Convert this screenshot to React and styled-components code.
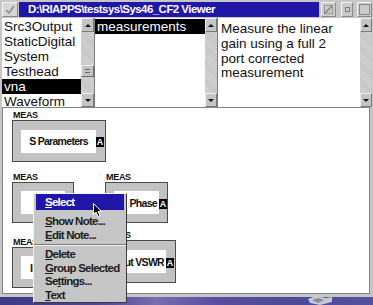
import React from "react";
import styled, { createGlobalStyle } from "styled-components";

const GlobalStyle = createGlobalStyle`
  html, body {
    margin: 0;
    padding: 0;
  }
  body {
    width: 373px;
    height: 305px;
    overflow: hidden;
    background: #4a4a98;
    font-family: "Liberation Sans", Arial, sans-serif;
  }
`;

const Screen = styled.div`
  width: 373px;
  height: 305px;
  display: flex;
  flex-direction: column;
`;

const Window = styled.div`
  height: 297px;
  box-sizing: border-box;
  padding: 0 1px 3px 2px;
  display: flex;
  flex-direction: column;
  background: #c6c6c6;
`;

const TitleBar = styled.div`
  height: 18px;
  display: flex;
  align-items: center;
`;

const SysButton = styled.div`
  width: 16px;
  height: 15px;
  box-sizing: border-box;
  background: #d6d6d6;
  border: 1px solid;
  border-color: #f4f4f4 #8a8a8a #8a8a8a #f4f4f4;
  display: flex;
  align-items: center;
  justify-content: center;
`;

const Title = styled.div`
  flex: 1;
  height: 15px;
  margin-left: 1px;
  background: #2016a8;
  color: #fff;
  font: bold 11.5px/15px "Liberation Sans", Arial, sans-serif;
  letter-spacing: -0.55px;
  padding-left: 9px;
  white-space: nowrap;
  overflow: hidden;
`;

const TitleButtons = styled.div`
  display: flex;
  align-items: center;
  margin-left: 2px;
`;

const TitleButton = styled.div`
  width: ${(p) => p.$w}px;
  height: 15px;
  margin-left: ${(p) => p.$gap}px;
  box-sizing: border-box;
  background: #cacaca;
  border: 1px solid;
  border-color: #f4f4f4 #8a8a8a #8a8a8a #f4f4f4;
  display: flex;
  align-items: center;
  justify-content: center;
`;

const Panes = styled.div`
  height: 89px;
  display: flex;
`;

const Pane = styled.div`
  display: flex;
  width: ${(p) => (p.$w ? `${p.$w}px` : "auto")};
  flex: ${(p) => (p.$w ? "none" : "1")};
  box-sizing: border-box;
  border-right: ${(p) => (p.$last ? "none" : "1px solid #7c7c7c")};
`;

const List = styled.div`
  flex: 1;
  background: #fff;
  padding-top: 1px;
  overflow: hidden;
  font-size: 13.5px;
  color: #101010;
`;

const ListRow = styled.div`
  height: 15px;
  line-height: 15px;
  padding-left: 2px;
  white-space: nowrap;
  background: ${(p) => (p.$selected ? "#000" : "transparent")};
  color: ${(p) => (p.$selected ? "#fff" : "inherit")};
`;

const NoteText = styled.div`
  flex: 1;
  background: #fff;
  padding: 4px 0 0 3px;
  font-size: 13.5px;
  line-height: 14.8px;
  color: #101010;
  & p {
    margin: 0;
    max-width: 126px;
  }
`;

const ScrollBar = styled.div`
  width: ${(p) => p.$w}px;
  display: flex;
  flex-direction: column;
  background: #cdcdcd;
`;

const ArrowButton = styled.div`
  height: 14px;
  box-sizing: border-box;
  background: #c4c4c4;
  border: 1px solid;
  border-color: #f0f0f0 #7a7a7a #7a7a7a #f0f0f0;
  display: flex;
  align-items: center;
  justify-content: center;
  &::after {
    content: "";
    border-left: 3px solid transparent;
    border-right: 3px solid transparent;
    ${(p) =>
      p.$down ? "border-top: 3px solid #111;" : "border-bottom: 3px solid #111;"}
  }
`;

const Track = styled.div`
  flex: 1;
  background: repeating-linear-gradient(45deg, #d2d2d2 0 1px, #c4c4c4 1px 2px);
`;

const Thumb = styled.div`
  margin-top: ${(p) => p.$offset}px;
  height: 12px;
  box-sizing: border-box;
  background: #c4c4c4;
  border: 1px solid;
  border-color: #f0f0f0 #6a6a6a #6a6a6a #f0f0f0;
  display: flex;
  flex-direction: column;
  justify-content: center;
  gap: 2px;
  padding: 0 3px;
  & i {
    display: block;
    height: 1px;
    background: #6a6a6a;
  }
`;

const Canvas = styled.div`
  flex: 1;
  position: relative;
  margin-right: 2px;
  background: #fff;
  border: 1px solid #858585;
`;

const Node = styled.div`
  position: absolute;
  left: ${(p) => p.$x}px;
  top: ${(p) => p.$y}px;
  display: flex;
  flex-direction: column;
`;

const NodeTag = styled.span`
  font: bold 9px/10px "Liberation Sans", Arial, sans-serif;
  letter-spacing: -0.3px;
  color: #111;
  padding-left: 1px;
`;

const NodeBox = styled.div`
  width: ${(p) => p.$w}px;
  height: ${(p) => p.$h}px;
  box-sizing: border-box;
  background: #c2c2c2;
  border: 1px solid #4a4a4a;
  display: flex;
  align-items: center;
  padding-left: 8px;
`;

const Field = styled.div`
  width: ${(p) => p.$w}px;
  height: 23px;
  box-sizing: border-box;
  padding-right: ${(p) => (p.$end ? 2 : 0)}px;
  background: #fff;
  display: flex;
  align-items: center;
  justify-content: ${(p) => (p.$end ? "flex-end" : "center")};
  overflow: hidden;
  white-space: nowrap;
  font: bold 10.5px "Liberation Sans", Arial, sans-serif;
  letter-spacing: -0.7px;
  color: #111;
`;

const Badge = styled.span`
  width: 8px;
  height: 10px;
  margin-top: 2px;
  background: #000;
  color: #fff;
  font: bold 9px/10px "Liberation Sans", Arial, sans-serif;
  text-align: center;
`;

const Menu = styled.div`
  position: absolute;
  left: 30px;
  top: 85px;
  z-index: 10;
  width: 94px;
  box-sizing: border-box;
  padding: 0 2px;
  background: #c6c6c6;
  border: 1px solid;
  border-color: #f2f2f2 #3a3a3a #3a3a3a #f2f2f2;
  font: bold 11.5px "Liberation Sans", Arial, sans-serif;
  letter-spacing: -0.75px;
  color: #1c1c1c;
`;

const MenuItem = styled.div`
  height: ${(p) => (p.$active ? 16 : 13.5)}px;
  line-height: ${(p) => (p.$active ? 16 : 13.5)}px;
  margin-bottom: ${(p) => (p.$active ? 5 : 0)}px;
  padding-left: 9px;
  white-space: nowrap;
  background: ${(p) => (p.$active ? "#2016a8" : "transparent")};
  color: ${(p) => (p.$active ? "#fff" : "inherit")};
`;

const MenuSeparator = styled.div`
  margin: 2px -2px;
  border-top: 1px solid #7c7c7c;
  border-bottom: 1px solid #f2f2f2;
`;

const Cursor = styled.svg`
  position: absolute;
  left: 90px;
  top: 95px;
  z-index: 11;
`;

const Desktop = styled.div`
  flex: 1;
  position: relative;
  background: linear-gradient(
    90deg,
    #3a3a88 0%,
    #4c4498 25%,
    #7a6cb0 42%,
    #5a4ca0 58%,
    #4a4a98 80%,
    #5252a0 100%
  );
`;

const TrayIcon = styled.svg`
  position: absolute;
  left: 306px;
  top: -2px;
`;

const listOne = ["Src3Output", "StaticDigital", "System", "Testhead", "vna", "Waveform"];

const nodes = [
  { x: 9, y: 2, w: 94, h: 42, fw: 75, text: "S Parameters" },
  { x: 9, y: 64, w: 62, h: 41, fw: 45, text: "Gain" },
  { x: 102, y: 64, w: 63, h: 41, fw: 45, text: "Phase", end: true },
  { x: 9, y: 129, w: 82, h: 41, fw: 64, text: "Input VSWR", end: true },
  { x: 102, y: 122, w: 71, h: 43, fw: 52, text: "Output VSWR", end: true },
];

const Scroll = ({ w, thumb }) => (
  <ScrollBar $w={w}>
    <ArrowButton />
    <Track>
      {thumb !== undefined && (
        <Thumb $offset={thumb}>
          <i />
          <i />
        </Thumb>
      )}
    </Track>
    <ArrowButton $down />
  </ScrollBar>
);

const App = () => {
  return (
    <>
      <GlobalStyle />
      <Screen>
        <Window>
          <TitleBar>
            <SysButton>
              <svg width="10" height="9" viewBox="0 0 10 9">
                <polyline points="1,5 4,8 9,1" fill="none" stroke="#8c8c8c" strokeWidth="1.6" />
              </svg>
            </SysButton>
            <Title>D:\RIAPPS\testsys\Sys46_CF2 Viewer</Title>
            <TitleButtons>
              <TitleButton $w={15} $gap={0}>
                <svg width="9" height="9" viewBox="0 0 9 9">
                  <rect x="0.5" y="0.5" width="8" height="8" fill="none" stroke="#9a9a9a" />
                  <line x1="1" y1="8" x2="8" y2="1" stroke="#7a7a7a" strokeWidth="1.2" />
                </svg>
              </TitleButton>
              <TitleButton $w={12} $gap={5}>
                <svg width="5" height="5" viewBox="0 0 5 5">
                  <rect x="0.5" y="0.5" width="4" height="4" fill="none" stroke="#7a7a7a" />
                </svg>
              </TitleButton>
              <TitleButton $w={15} $gap={4}>
                <svg width="11" height="11" viewBox="0 0 11 11">
                  <rect x="0.5" y="0.5" width="10" height="10" fill="none" stroke="#8a8a8a" />
                </svg>
              </TitleButton>
            </TitleButtons>
          </TitleBar>

          <Panes>
            <Pane $w={93}>
              <List>
                {listOne.map((item) => (
                  <ListRow key={item} $selected={item === "vna"}>
                    {item}
                  </ListRow>
                ))}
              </List>
              <Scroll w={13} thumb={33} />
            </Pane>
            <Pane $w={123}>
              <List>
                <ListRow $selected>measurements</ListRow>
              </List>
              <Scroll w={12} />
            </Pane>
            <Pane $last>
              <NoteText>
                <p>Measure the linear gain using a full 2 port corrected measurement</p>
              </NoteText>
              <Scroll w={12} />
            </Pane>
          </Panes>

          <Canvas>
            {nodes.map((n) => (
              <Node key={n.text} $x={n.x} $y={n.y}>
                <NodeTag>MEAS</NodeTag>
                <NodeBox $w={n.w} $h={n.h}>
                  <Field $w={n.fw} $end={n.end}>
                    {n.text}
                  </Field>
                  <Badge>A</Badge>
                </NodeBox>
              </Node>
            ))}

            <Menu>
              <MenuItem $active>
                <u>S</u>elect
              </MenuItem>
              <MenuItem>
                <u>S</u>how Note...
              </MenuItem>
              <MenuItem>
                <u>E</u>dit Note...
              </MenuItem>
              <MenuSeparator />
              <MenuItem>
                <u>D</u>elete
              </MenuItem>
              <MenuItem>
                <u>G</u>roup Selected
              </MenuItem>
              <MenuItem>
                Se<u>t</u>tings...
              </MenuItem>
              <MenuItem>
                <u>T</u>ext
              </MenuItem>
            </Menu>

            <Cursor width="11" height="15" viewBox="0 0 11 15">
              <path
                d="M0.5 0.5 L0.5 11.5 L3 9 L5 13.5 L7 12.6 L5 8.3 L8.5 8.3 Z"
                fill="#000"
                stroke="#fff"
                strokeWidth="1"
              />
            </Cursor>
          </Canvas>
        </Window>
        <Desktop>
          <TrayIcon width="28" height="10" viewBox="0 0 28 10">
            <polygon points="2,4 10,1 20,3 26,2 26,7 14,10 4,8" fill="#c8c8d0" />
            <polygon points="6,5 12,3 18,5 12,8" fill="#8a8a98" />
          </TrayIcon>
        </Desktop>
      </Screen>
    </>
  );
};

export default App;
